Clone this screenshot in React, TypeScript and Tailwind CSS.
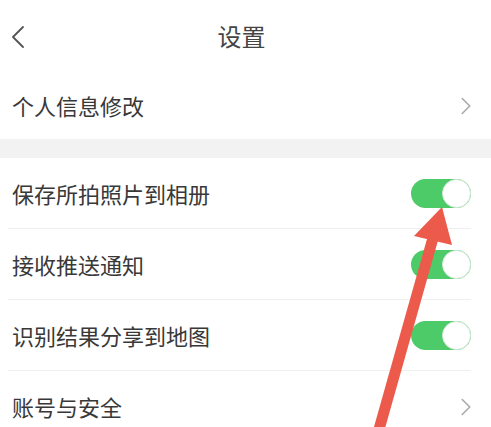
import { ChevronLeft, ChevronRight } from 'lucide-react'

const Toggle = () => (
  <div className="w-[60px] h-[29px] rounded-full bg-[#4ccb68] flex items-center justify-end">
    <div className="w-[29px] h-[29px] rounded-full bg-white border-[1.5px] border-[#d9e6dc]" />
  </div>
)

const App = () => {
  const switches = ['保存所拍照片到相册', '接收推送通知', '识别结果分享到地图']

  return (
    <div
      className="relative w-[491px] h-[427px] overflow-hidden bg-white text-[#383838]"
      style={{ fontFamily: '"Noto Sans CJK SC", "Noto Sans", sans-serif' }}
    >
      {/* Header */}
      <div className="h-[72px] flex items-center justify-center relative pr-[8px]">
        <ChevronLeft className="absolute left-[-2px] top-[17px] w-[40px] h-[40px] text-[#555]" strokeWidth={1.1} />
        <span className="text-[24px] text-[#444]">设置</span>
      </div>

      {/* Profile */}
      <div className="h-[67px] flex items-center justify-between pl-[12px] pr-[10px]">
        <span className="text-[22px]">个人信息修改</span>
        <ChevronRight className="w-[30px] h-[30px] text-[#aaa]" strokeWidth={1.3} />
      </div>

      <div className="h-[19px] bg-[#f2f2f2]" />

      {/* Switch rows */}
      <div className="pl-[8px] pr-[20px]">
        {switches.map((label) => (
          <div key={label} className="h-[71px] flex items-center justify-between border-b border-[#efefef] pl-[4px]">
            <span className="text-[22px]">{label}</span>
            <Toggle />
          </div>
        ))}
        <div className="h-[71px] flex items-center justify-between pl-[4px] mr-[-10px]">
          <span className="text-[22px]">账号与安全</span>
          <ChevronRight className="w-[30px] h-[30px] text-[#aaa]" strokeWidth={1.3} />
        </div>
      </div>

      {/* Red annotation arrow */}
      <svg className="absolute inset-0 pointer-events-none" width="491" height="427" viewBox="0 0 491 427">
        <line x1="433" y1="238" x2="376" y2="440" stroke="#ec5a4b" strokeWidth="11" />
        <polygon points="442,207 414,236 452,245" fill="#ec5a4b" />
      </svg>
    </div>
  )
}

export default App
